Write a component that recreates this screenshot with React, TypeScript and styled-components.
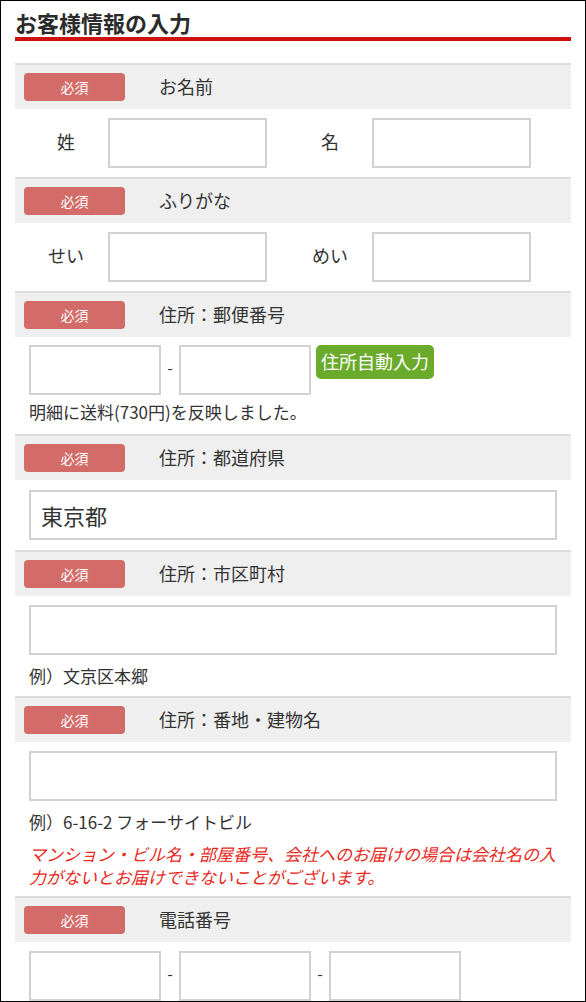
import styled, { createGlobalStyle } from "styled-components";

const GlobalStyle = createGlobalStyle`
  html, body {
    margin: 0;
    padding: 0;
    background: #fff;
  }
  body {
    font-family: "Noto Sans CJK JP", "Noto Sans", sans-serif;
    color: #333;
  }
  * {
    box-sizing: border-box;
  }
`;

const Frame = styled.div`
  width: 586px;
  height: 1002px;
  border: 1px solid #000;
  overflow: hidden;
  background: #fff;
  padding: 0 14px;
`;

const Title = styled.h2`
  margin: 7px 0 22px;
  font-size: 22px;
  line-height: 29px;
  font-weight: 700;
  color: #2b2b2b;
  border-bottom: 4px solid #d0120e;
`;

const SectionHead = styled.div`
  display: flex;
  align-items: center;
  height: 46px;
  padding-left: 9px;
  background: #efefef;
  border-top: 2px solid #dddddd;
`;

const Badge = styled.span`
  display: flex;
  align-items: center;
  justify-content: center;
  width: 101px;
  height: 28px;
  margin-right: 34px;
  border-radius: 4px;
  background: #d36c69;
  color: #fff;
  font-size: 14px;
  line-height: 26px;
`;

const HeadLabel = styled.span`
  font-size: 18px;
  line-height: 24px;
  margin-bottom: 3px;
  color: #333;
`;

const PairRow = styled.div`
  display: flex;
  gap: 21px;
  padding: 9px 0 9px 9px;
`;

const Pair = styled.div`
  display: flex;
  align-items: center;
`;

const PairLabel = styled.span`
  width: 84px;
  margin-bottom: 4px;
  text-align: center;
  font-size: 18px;
  line-height: 24px;
  color: #333;
`;

const Field = styled.input<{ $w?: number; $size?: number }>`
  display: block;
  width: ${(p) => (p.$w ? `${p.$w}px` : "100%")};
  height: 50px;
  margin: 0;
  padding: 0 10px;
  border: 2px solid #d2d2d2;
  border-radius: 0;
  background: #fff;
  font-family: inherit;
  font-size: ${(p) => p.$size ?? 18}px;
  color: #333;
  outline: none;
`;

const Block = styled.div<{ $top?: number; $bottom?: number }>`
  padding: ${(p) => p.$top ?? 9}px 14px ${(p) => p.$bottom ?? 9}px;
`;

const InlineRow = styled.div`
  display: flex;
  align-items: flex-start;
`;

const Dash = styled.span`
  width: 18px;
  height: 50px;
  line-height: 44px;
  text-align: center;
  font-size: 16px;
  color: #333;
`;

const AutoButton = styled.button`
  height: 34px;
  margin-left: 5px;
  padding: 0 5px 2px;
  border: none;
  border-radius: 5px;
  background: #6aab2c;
  color: #fff;
  font-family: inherit;
  font-size: 18px;
  line-height: 32px;
`;

const Note = styled.p<{ $gap?: number }>`
  margin: ${(p) => p.$gap ?? 9}px 0 0;
  font-size: 17px;
  line-height: 24px;
  color: #333;
`;

const Warning = styled.p`
  margin: 8px 0 0;
  font-size: 17px;
  line-height: 23px;
  font-style: italic;
  color: #e8291c;
`;

function Section({ label }: { label: string }) {
  return (
    <SectionHead>
      <Badge>必須</Badge>
      <HeadLabel>{label}</HeadLabel>
    </SectionHead>
  );
}

function NamePair({ a, b }: { a: string; b: string }) {
  return (
    <PairRow>
      <Pair>
        <PairLabel>{a}</PairLabel>
        <Field $w={159} />
      </Pair>
      <Pair>
        <PairLabel>{b}</PairLabel>
        <Field $w={159} />
      </Pair>
    </PairRow>
  );
}

function App() {
  return (
    <>
      <GlobalStyle />
      <Frame>
        <Title>お客様情報の入力</Title>

        <Section label="お名前" />
        <NamePair a="姓" b="名" />

        <Section label="ふりがな" />
        <NamePair a="せい" b="めい" />

        <Section label="住所：郵便番号" />
        <Block $top={8} $bottom={10}>
          <InlineRow>
            <Field $w={132} />
            <Dash>-</Dash>
            <Field $w={132} />
            <AutoButton type="button">住所自動入力</AutoButton>
          </InlineRow>
          <Note $gap={5}>明細に送料(730円)を反映しました。</Note>
        </Block>

        <Section label="住所：都道府県" />
        <Block $top={10} $bottom={10}>
          <Field $size={22} defaultValue="東京都" />
        </Block>

        <Section label="住所：市区町村" />
        <Block $top={9} $bottom={8}>
          <Field />
          <Note>例）文京区本郷</Note>
        </Block>

        <Section label="住所：番地・建物名" />
        <Block $top={9} $bottom={8}>
          <Field />
          <Note>例）6-16-2 フォーサイトビル</Note>
          <Warning>
            マンション・ビル名・部屋番号、会社へのお届けの場合は会社名の入力がないとお届けできないことがございます。
          </Warning>
        </Block>

        <Section label="電話番号" />
        <Block $top={9} $bottom={9}>
          <InlineRow>
            <Field $w={132} />
            <Dash>-</Dash>
            <Field $w={132} />
            <Dash>-</Dash>
            <Field $w={132} />
          </InlineRow>
        </Block>
      </Frame>
    </>
  );
}

export default App;
